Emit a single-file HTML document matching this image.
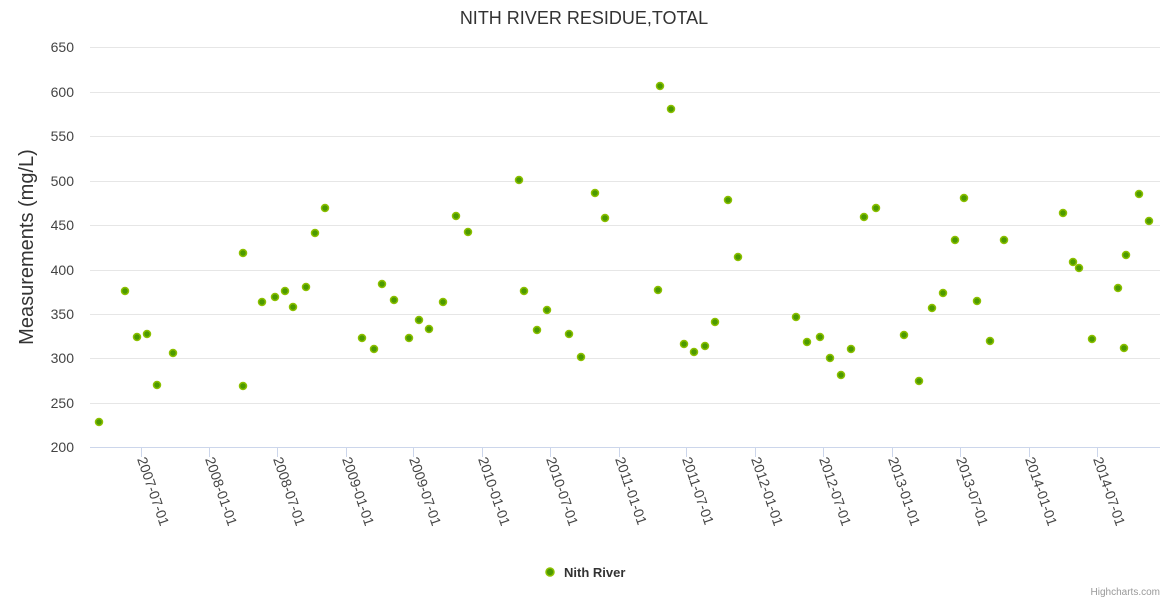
<!DOCTYPE html>
<html><head><meta charset="utf-8"><style>
html,body{margin:0;padding:0;background:#fff;}
svg{display:block;font-family:"Liberation Sans",sans-serif;}
</style></head><body>
<svg width="1170" height="600" viewBox="0 0 1170 600" xmlns="http://www.w3.org/2000/svg">
<text x="584" y="24" text-anchor="middle" font-size="18" fill="#333">NITH RIVER RESIDUE,TOTAL</text>
<g stroke="#e6e6e6" stroke-width="1">
<line x1="90" x2="1160" y1="47.5" y2="47.5"/><line x1="90" x2="1160" y1="92.5" y2="92.5"/>
<line x1="90" x2="1160" y1="136.5" y2="136.5"/><line x1="90" x2="1160" y1="181.5" y2="181.5"/>
<line x1="90" x2="1160" y1="225.5" y2="225.5"/><line x1="90" x2="1160" y1="270.5" y2="270.5"/>
<line x1="90" x2="1160" y1="314.5" y2="314.5"/><line x1="90" x2="1160" y1="358.5" y2="358.5"/>
<line x1="90" x2="1160" y1="403.5" y2="403.5"/>
</g>
<line x1="90" x2="1160" y1="447.5" y2="447.5" stroke="#ccd6eb"/>
<g font-size="14" fill="#444" text-anchor="end">
<text x="74" y="52">650</text><text x="74" y="97">600</text><text x="74" y="141">550</text>
<text x="74" y="186">500</text><text x="74" y="230">450</text><text x="74" y="275">400</text>
<text x="74" y="319">350</text><text x="74" y="363">300</text><text x="74" y="408">250</text>
<text x="74" y="452">200</text>
</g>
<text transform="translate(33,247) rotate(-90)" text-anchor="middle" font-size="20" fill="#333">Measurements (mg/L)</text>
<g id="ticks" stroke="#ccd6eb"></g>
<g id="xl" font-size="14" fill="#444"></g>
<g id="pts"></g>
<circle cx="550" cy="572" r="4" fill="#4c9a00" stroke="#8cc000" stroke-width="1.5"/>
<text x="564" y="577" font-size="13" font-weight="bold" fill="#333">Nith River</text>
<text x="1160" y="595" text-anchor="end" font-size="10" fill="#999">Highcharts.com</text>
</svg>
<script>
var ns="http://www.w3.org/2000/svg";
var ticks=[[141,"2007-07-01"],[209,"2008-01-01"],[277,"2008-07-01"],[346,"2009-01-01"],[413,"2009-07-01"],[482,"2010-01-01"],[550,"2010-07-01"],[619,"2011-01-01"],[686,"2011-07-01"],[755,"2012-01-01"],[823,"2012-07-01"],[892,"2013-01-01"],[960,"2013-07-01"],[1029,"2014-01-01"],[1097,"2014-07-01"]];
var tg=document.getElementById("ticks"),xl=document.getElementById("xl");
ticks.forEach(function(t){
var l=document.createElementNS(ns,"line");l.setAttribute("x1",t[0]+.5);l.setAttribute("x2",t[0]+.5);l.setAttribute("y1",447);l.setAttribute("y2",457);tg.appendChild(l);
var tx=document.createElementNS(ns,"text");tx.setAttribute("transform","translate("+(t[0]-4)+",459) rotate(71)");tx.textContent=t[1];xl.appendChild(tx);});
var p=[[99,422],[125,291],[137,337],[147,334],[157,385],[173,353],[243,386],[243,253],[262,302],[275,297],[285,291],[293,307],[306,287],[315,233],[325,208],[362,338],[374,349],[382,284],[394,300],[409,338],[419,320],[429,329],[443,302],[456,216],[468,232],[519,180],[524,291],[537,330],[547,310],[569,334],[581,357],[595,193],[605,218],[658,290],[660,86],[671,109],[684,344],[694,352],[705,346],[715,322],[728,200],[738,257],[796,317],[807,342],[820,337],[830,358],[841,375],[851,349],[864,217],[876,208],[904,335],[919,381],[932,308],[943,293],[955,240],[964,198],[977,301],[990,341],[1004,240],[1063,213],[1073,262],[1079,268],[1092,339],[1118,288],[1124,348],[1126,255],[1139,194],[1149,221]];
var pg=document.getElementById("pts");
p.forEach(function(a){var c=document.createElementNS(ns,"circle");c.setAttribute("cx",a[0]);c.setAttribute("cy",a[1]);c.setAttribute("r",3.5);c.setAttribute("fill","#4c9a00");c.setAttribute("stroke","#8cc000");c.setAttribute("stroke-width","1.5");pg.appendChild(c);});
</script>
</body></html>
